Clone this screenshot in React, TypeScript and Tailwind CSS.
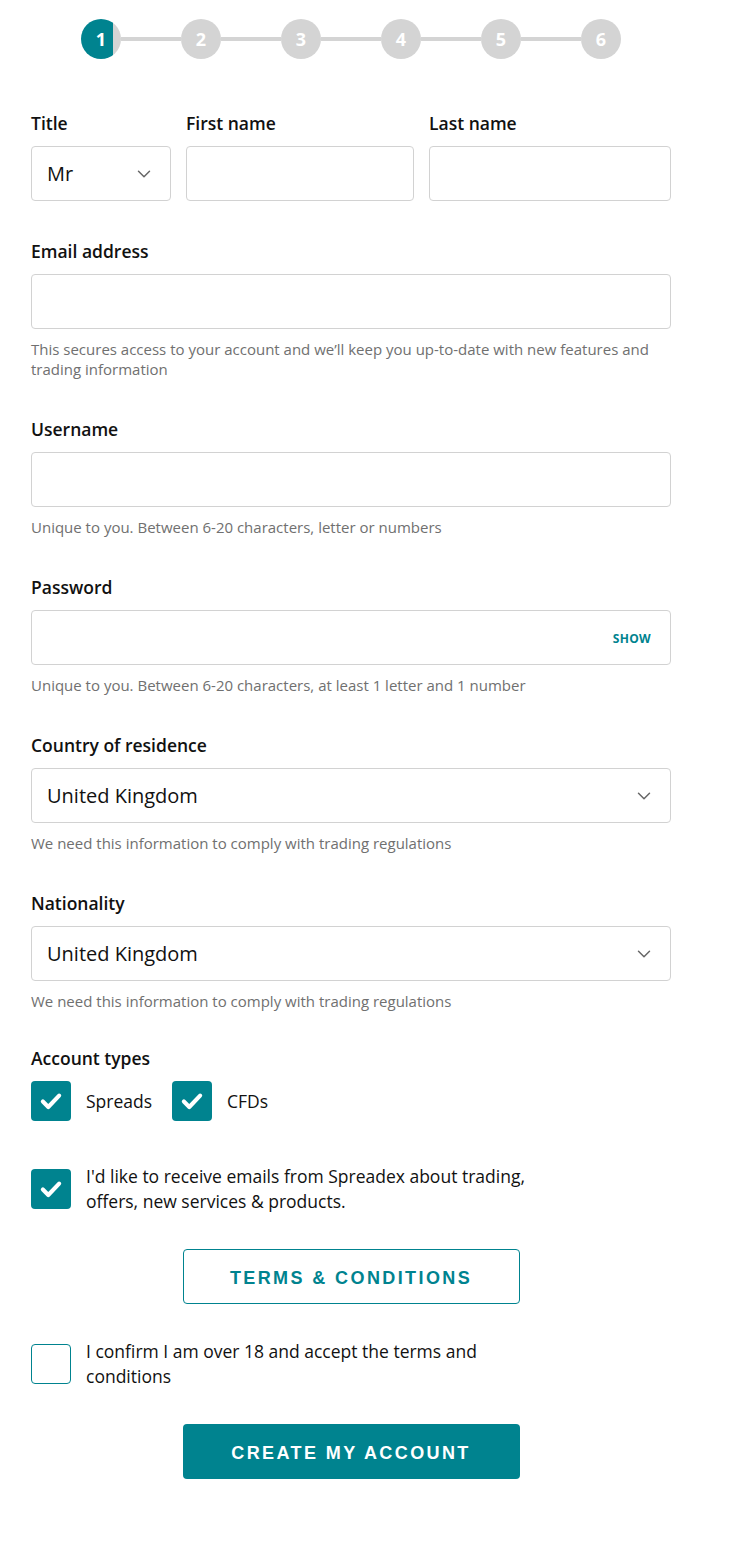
import { ChevronDown } from "lucide-react";

const font = "font-['Open_Sans',sans-serif]";
const btnFont = "font-['Liberation_Sans',Arial,sans-serif]";

function Steps() {
  return (
    <div className="flex items-center justify-center pt-[19px]">
      {[1, 2, 3, 4, 5, 6].map((n, i) => (
        <div key={n} className="flex items-center">
          {i > 0 && <div className="h-[4px] w-[60px] bg-[#d4d4d4]" />}
          <div
            className={
              n === 1
                ? "flex h-[40px] w-[40px] items-center justify-center rounded-full bg-[linear-gradient(to_right,#00838f_80%,#d4d4d4_80%)] text-[18px] font-bold text-white"
                : "flex h-[40px] w-[40px] items-center justify-center rounded-full bg-[#d4d4d4] text-[18px] font-bold text-white"
            }
          >
            {n}
          </div>
        </div>
      ))}
    </div>
  );
}

function Label({ children }: { children: React.ReactNode }) {
  return <div className="mb-[11px] text-[17.5px] font-semibold leading-[24px] text-[#111]">{children}</div>;
}

function Box({ children }: { children?: React.ReactNode }) {
  return (
    <div className="flex h-[55px] items-center rounded-[4px] border border-[#d2d2d2] bg-white pl-[15px] pr-[15px]">
      {children}
    </div>
  );
}

function Select({ value }: { value: string }) {
  return (
    <Box>
      <span className="flex-1 text-[20px] text-[#111]">{value}</span>
      <ChevronDown size={22} strokeWidth={1.6} className="text-[#666]" />
    </Box>
  );
}

function Help({ children }: { children: React.ReactNode }) {
  return <p className="mt-[10px] text-[15px] leading-[20px] text-[#707070]">{children}</p>;
}

function Check({ checked }: { checked: boolean }) {
  return checked ? (
    <div className="flex h-[40px] w-[40px] shrink-0 items-center justify-center rounded-[4px] bg-[#00838f]">
      <svg width="26" height="26" viewBox="0 0 24 24" fill="none">
        <path d="M4.5 12.5l5 5 10-10.5" stroke="white" strokeWidth="3.8" strokeLinecap="round" strokeLinejoin="round" />
      </svg>
    </div>
  ) : (
    <div className="h-[40px] w-[40px] shrink-0 rounded-[4px] border border-[#00838f] bg-white" />
  );
}

export default function App() {
  return (
    <div className={`min-h-[1553px] w-[732px] bg-white ${font}`}>
      <div className="ml-[31px] w-[640px]">
        <Steps />

        <div className="mt-[52px] grid grid-cols-[140px_228px_1fr] gap-x-[15px]">
          <div>
            <Label>Title</Label>
            <Select value="Mr" />
          </div>
          <div>
            <Label>First name</Label>
            <Box />
          </div>
          <div>
            <Label>Last name</Label>
            <Box />
          </div>
        </div>

        <div className="mt-[38px]">
          <Label>Email address</Label>
          <Box />
          <Help>
            This secures access to your account and we’ll keep you up-to-date with new features and trading
            information
          </Help>
        </div>

        <div className="mt-[38px]">
          <Label>Username</Label>
          <Box />
          <Help>Unique to you. Between 6-20 characters, letter or numbers</Help>
        </div>

        <div className="mt-[38px]">
          <Label>Password</Label>
          <Box>
            <span className="flex-1" />
            <span className="pr-[4px] pt-[3px] text-[12px] font-bold tracking-[0.3px] text-[#00838f]">SHOW</span>
          </Box>
          <Help>Unique to you. Between 6-20 characters, at least 1 letter and 1 number</Help>
        </div>

        <div className="mt-[38px]">
          <Label>Country of residence</Label>
          <Select value="United Kingdom" />
          <Help>We need this information to comply with trading regulations</Help>
        </div>

        <div className="mt-[38px]">
          <Label>Nationality</Label>
          <Select value="United Kingdom" />
          <Help>We need this information to comply with trading regulations</Help>
        </div>

        <div className="mt-[35px]">
          <Label>Account types</Label>
          <div className="flex items-center gap-[15px] text-[17.5px] text-[#111]">
            <Check checked />
            <span className="mr-[5px]">Spreads</span>
            <Check checked />
            <span>CFDs</span>
          </div>
        </div>

        <div className="mt-[43px] flex items-center gap-[15px]">
          <Check checked />
          <span className="w-[460px] text-[17.5px] leading-[25px] text-[#111]">
            I'd like to receive emails from Spreadex about trading, offers, new services &amp; products.
          </span>
        </div>

        <div className="mt-[35px] flex justify-center">
          <button
            className={`h-[55px] w-[337px] rounded-[4px] border border-[#00838f] bg-white pt-[4px] text-[18px] font-bold tracking-[2.4px] text-[#00838f] ${btnFont}`}
          >
            TERMS &amp; CONDITIONS
          </button>
        </div>

        <div className="mt-[35px] flex items-center gap-[15px]">
          <Check checked={false} />
          <span className="w-[420px] text-[17.5px] leading-[25px] text-[#111]">
            I confirm I am over 18 and accept the terms and conditions
          </span>
        </div>

        <div className="mt-[35px] flex justify-center">
          <button
            className={`h-[55px] w-[337px] rounded-[4px] bg-[#00838f] pt-[4px] text-[18px] font-bold tracking-[2.4px] text-white ${btnFont}`}
          >
            CREATE MY ACCOUNT
          </button>
        </div>
      </div>
    </div>
  );
}
